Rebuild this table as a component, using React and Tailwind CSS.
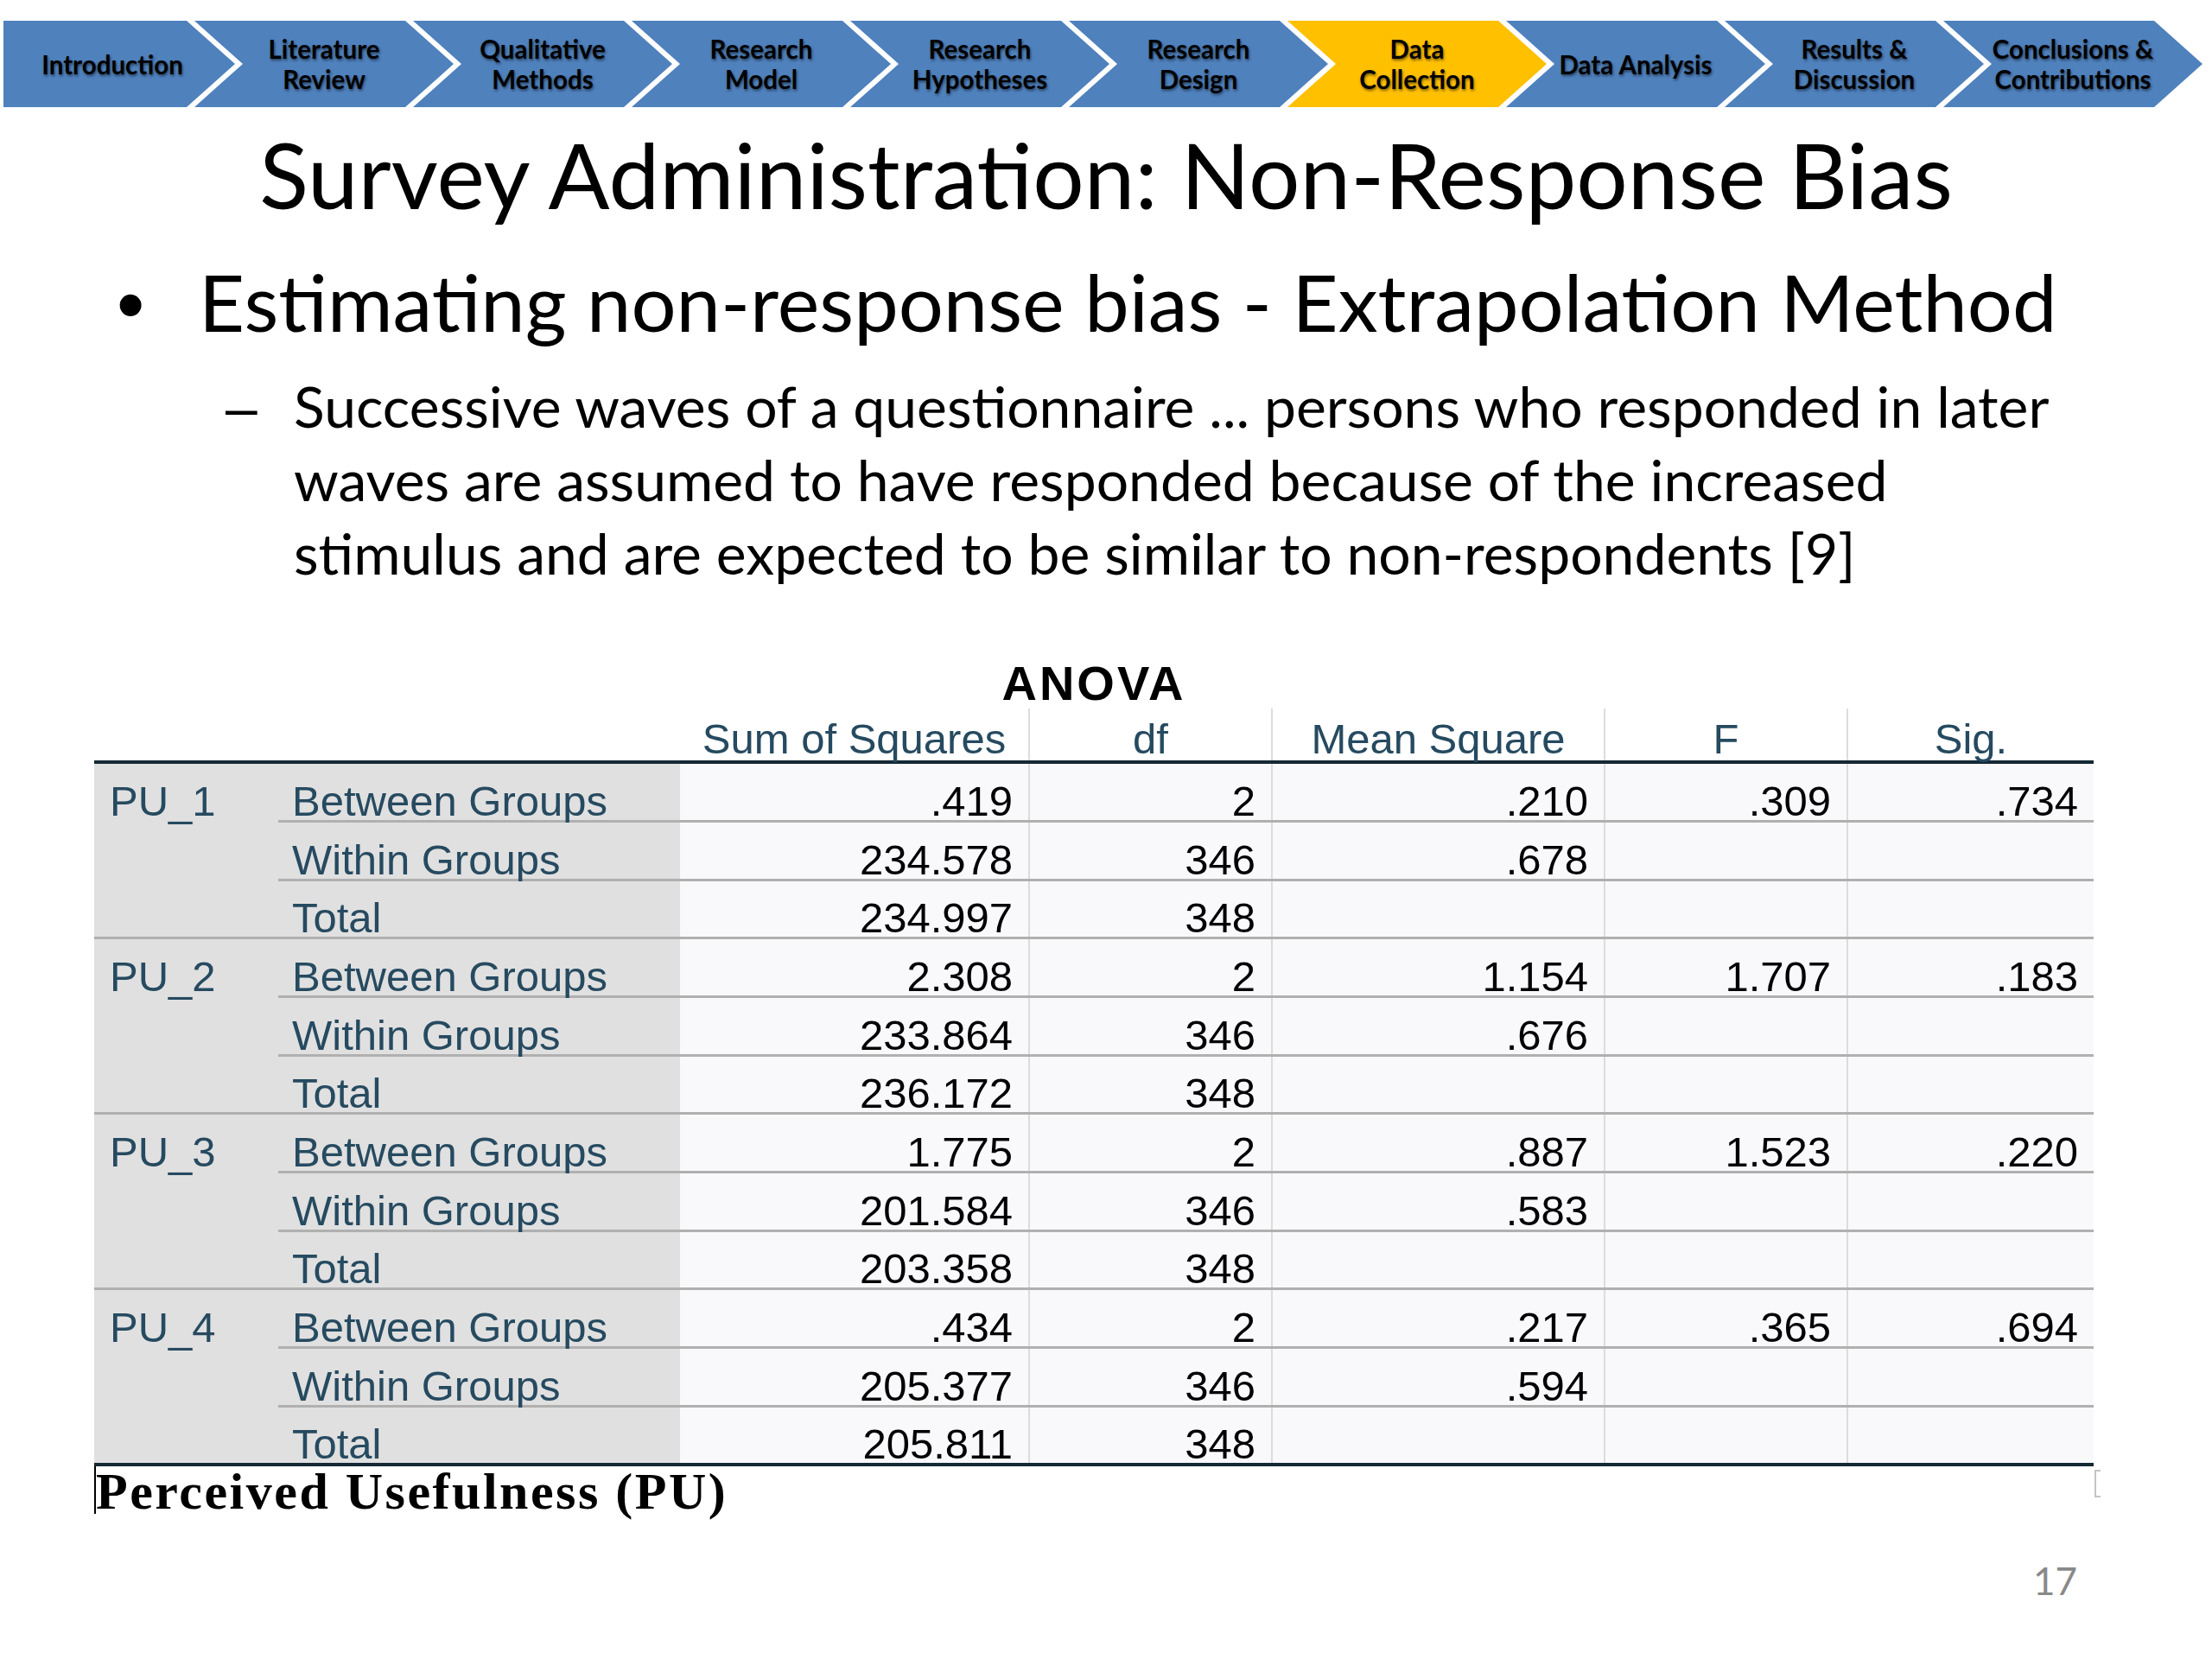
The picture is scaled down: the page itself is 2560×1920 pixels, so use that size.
import React from "react";

const chevrons = [
  { lines: ["Introduction"] },
  { lines: ["Literature", "Review"] },
  { lines: ["Qualitative", "Methods"] },
  { lines: ["Research", "Model"] },
  { lines: ["Research", "Hypotheses"] },
  { lines: ["Research", "Design"] },
  { lines: ["Data", "Collection"], active: true },
  { lines: ["Data Analysis"] },
  { lines: ["Results &", "Discussion"] },
  { lines: ["Conclusions &", "Contributions"] },
];

const groups = [
  {
    name: "PU_1",
    rows: [
      ["Between Groups", ".419", "2", ".210", ".309", ".734"],
      ["Within Groups", "234.578", "346", ".678", "", ""],
      ["Total", "234.997", "348", "", "", ""],
    ],
  },
  {
    name: "PU_2",
    rows: [
      ["Between Groups", "2.308", "2", "1.154", "1.707", ".183"],
      ["Within Groups", "233.864", "346", ".676", "", ""],
      ["Total", "236.172", "348", "", "", ""],
    ],
  },
  {
    name: "PU_3",
    rows: [
      ["Between Groups", "1.775", "2", ".887", "1.523", ".220"],
      ["Within Groups", "201.584", "346", ".583", "", ""],
      ["Total", "203.358", "348", "", "", ""],
    ],
  },
  {
    name: "PU_4",
    rows: [
      ["Between Groups", ".434", "2", ".217", ".365", ".694"],
      ["Within Groups", "205.377", "346", ".594", "", ""],
      ["Total", "205.811", "348", "", "", ""],
    ],
  },
];

function Chevron({ item, first }) {
  const shape = first
    ? "w-[268px] ml-[4px] pr-[16px] [clip-path:polygon(0_0,212px_0,268px_50%,212px_100%,0_100%)]"
    : "w-[300px] ml-[-47px] [clip-path:polygon(0_0,244px_0,300px_50%,244px_100%,0_100%,56px_50%)]";
  const color = item.active ? "bg-[#ffc000]" : "bg-[#4f81bd]";
  return (
    <div
      className={`${shape} ${color} h-full shrink-0 flex flex-col items-center justify-center text-center font-['Lato','Open_Sans',sans-serif] font-bold text-[29.5px] leading-[35px] text-black [text-shadow:1px_2px_3px_rgba(0,0,0,0.5)]`}
    >
      {item.lines.map((l) => (
        <span key={l} className="whitespace-nowrap">
          {l}
        </span>
      ))}
    </div>
  );
}

function ValueCell({ w, children, border = true }) {
  return (
    <div
      className={`${w} h-full bg-[#f9f9fb] flex items-end justify-end pr-[18px] ${
        border ? "border-r-2 border-[#dcdcdc]" : ""
      } text-[49px] leading-[44px] text-[#010205]`}
    >
      {children}
    </div>
  );
}

function Group({ g, last }) {
  return (
    <div
      className={`flex ${
        last ? "border-b-4 border-[#152935]" : "border-b-[3px] border-[#b0b0b0]"
      }`}
    >
      <div className="w-[213px] shrink-0 bg-[#e0e0e0]">
        <div className="h-[65px] flex items-end pl-[18px] text-[49px] leading-[44px] text-[#264a60]">
          {g.name}
        </div>
      </div>
      <div className="flex flex-col">
        {g.rows.map((r, i) => {
          const lastRow = i === g.rows.length - 1;
          return (
            <div
              key={i}
              className={`flex ${
                lastRow ? "h-[64px]" : "h-[68px] border-b-[3px] border-[#b0b0b0]"
              }`}
            >
              <div className="w-[465px] h-full bg-[#e0e0e0] flex items-end pl-[16px] text-[49px] leading-[44px] text-[#264a60]">
                {r[0]}
              </div>
              <ValueCell w="w-[405px]">{r[1]}</ValueCell>
              <ValueCell w="w-[281px]">{r[2]}</ValueCell>
              <ValueCell w="w-[385px]">{r[3]}</ValueCell>
              <ValueCell w="w-[281px]">{r[4]}</ValueCell>
              <ValueCell w="w-[284px]" border={false}>
                {r[5]}
              </ValueCell>
            </div>
          );
        })}
      </div>
    </div>
  );
}

function HeaderCell({ w, children, border = true }) {
  return (
    <div
      className={`${w} h-full flex items-end justify-center ${
        border ? "border-r-2 border-[#dcdcdc]" : ""
      } text-[49px] leading-[49px] text-[#264a60]`}
    >
      {children}
    </div>
  );
}

export default function App() {
  return (
    <div className="w-[2560px] h-[1920px] bg-white overflow-hidden flex flex-col">
      {/* Process chevrons */}
      <div className="pt-[24px]">
        <div className="flex h-[100px]">
          {chevrons.map((c, i) => (
            <Chevron key={i} item={c} first={i === 0} />
          ))}
        </div>
      </div>

      {/* Title */}
      <h1 className="mt-[14px] text-center font-['Lato','Open_Sans',sans-serif] text-[105px] leading-[126px] text-black whitespace-nowrap">
        Survey Administration: Non-Response Bias
      </h1>

      {/* Bullet */}
      <div className="mt-[30px] flex items-baseline font-['Lato','Open_Sans',sans-serif] text-[92px] leading-[110px] text-black">
        <span className="w-[230px] pl-[135px] shrink-0 font-['Liberation_Sans',Arial,sans-serif]">•</span>
        <span className="whitespace-nowrap">Estimating non-response bias - Extrapolation Method</span>
      </div>

      {/* Sub bullet */}
      <div className="mt-[20px] flex items-baseline font-['Lato','Open_Sans',sans-serif] text-[66px] leading-[85px] text-black">
        <span className="w-[340px] pl-[261px] shrink-0 font-['Liberation_Sans',Arial,sans-serif]">–</span>
        <p className="whitespace-nowrap">
          Successive waves of a questionnaire ... persons who responded in later
          <br />
          waves are assumed to have responded because of the increased
          <br />
          stimulus and are expected to be similar to non-respondents [9]
        </p>
      </div>

      {/* ANOVA table */}
      <div className="mt-[90px] ml-[109px] w-[2314px] font-['Liberation_Sans',Arial,sans-serif]">
        <div className="h-[48px] flex justify-center">
          <span className="mt-[-5px] font-bold text-[56px] leading-[48px] tracking-[3px] text-black">
            ANOVA
          </span>
        </div>
        <div className="flex h-[64px] border-b-4 border-[#152935]">
          <div className="w-[678px] shrink-0" />
          <HeaderCell w="w-[405px]">Sum of Squares</HeaderCell>
          <HeaderCell w="w-[281px]">df</HeaderCell>
          <HeaderCell w="w-[385px]">Mean Square</HeaderCell>
          <HeaderCell w="w-[281px]">F</HeaderCell>
          <HeaderCell w="w-[284px]" border={false}>
            Sig.
          </HeaderCell>
        </div>
        {groups.map((g, i) => (
          <Group key={g.name} g={g} last={i === groups.length - 1} />
        ))}
      </div>

      {/* Caption */}
      <div className="ml-[109px] w-[2322px] flex justify-between items-start">
        <div className="h-[55px] border-l-2 border-black pt-[2px] font-['Liberation_Serif','Times_New_Roman',serif] font-bold text-[60px] leading-[54px] tracking-[2.5px] text-black whitespace-nowrap">
          Perceived Usefulness (PU)
        </div>
        <div className="mt-[4px] w-[7px] h-[32px] border-l-2 border-t-2 border-b-2 border-[#c4c4c4]" />
      </div>

      {/* Page number */}
      <div className="mt-[49px] pr-[156px] text-right font-['Lato','Open_Sans',sans-serif] text-[44px] leading-[56px] text-[#898989]">
        17
      </div>
    </div>
  );
}
